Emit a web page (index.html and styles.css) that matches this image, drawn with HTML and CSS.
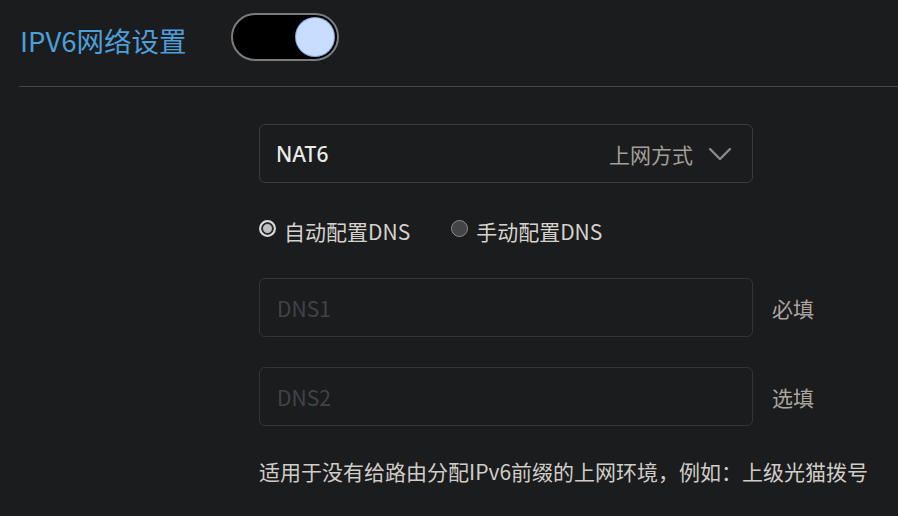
FILE: index.html
```html
<!DOCTYPE html>
<html lang="zh">
<head>
<meta charset="utf-8">
<link rel="stylesheet" href="styles.css">
</head>
<body>
<div class="page">
  <header class="head">
    <h1 class="title">IPV6网络设置</h1>
    <div class="toggle"><span class="knob"></span></div>
  </header>
  <div class="divider"></div>
  <main class="form">
    <div class="select">
      <span class="sel-value">NAT6</span>
      <span class="sel-label">上网方式</span>
      <svg class="chev" width="24" height="14" viewBox="0 0 24 14"><path d="M2 2 L12 12 L22 2" fill="none" stroke="#8a8a8a" stroke-width="2.4" stroke-linecap="round" stroke-linejoin="round"/></svg>
    </div>
    <div class="radios">
      <label class="radio"><span class="dot on"></span>自动配置DNS</label>
      <label class="radio"><span class="dot"></span>手动配置DNS</label>
    </div>
    <div class="row">
      <div class="input"><span class="ph">DNS1</span></div>
      <span class="hint">必填</span>
    </div>
    <div class="row">
      <div class="input"><span class="ph">DNS2</span></div>
      <span class="hint">选填</span>
    </div>
    <p class="note">适用于没有给路由分配IPv6前缀的上网环境，例如：上级光猫拨号</p>
  </main>
</div>
</body>
</html>
```
FILE: styles.css
```css
* { box-sizing: border-box; }
html, body { margin: 0; padding: 0; background: #1b1c1e; }
body {
  width: 898px; height: 516px; overflow: hidden;
  font-family: "Noto Sans CJK SC", "Noto Sans", sans-serif;
  color: #d0cdc8;
}
.page { padding-left: 19px; }
.head {
  display: flex; align-items: center;
  height: 86px; padding-left: 1px;
}
.title {
  margin: 0; font-weight: 400; font-size: 27.5px; color: #4d9fd9;
  width: 211px; line-height: 1;
  position: relative; top: -2px;
}
.toggle {
  width: 108px; height: 48px; border: 2px solid #7c7c7c; border-radius: 24px;
  background: #000; display: flex; align-items: center; justify-content: flex-end;
  padding-right: 3px; position: relative; top: -6px;
}
.knob {
  width: 38px; height: 38px; border-radius: 50%;
  background: #c8ddff; box-shadow: 0 0 0 1px #7fa9dd;
}
.divider { height: 1px; background: #434446; }
.form { padding-left: 240px; padding-top: 37px; }
.select {
  width: 494px; height: 59px; border: 1px solid #3a3b3e; border-radius: 6px;
  display: flex; align-items: center; padding: 0 20px 0 16px;
}
.sel-value { font-size: 21px; color: #ecebe8; font-weight: 500; flex: 1; font-family: "Noto Sans", "Noto Sans CJK SC", sans-serif;}
.sel-label { font-size: 21px; color: #a39f98; margin-right: 15px; }
.chev { display: block; }
.radios { display: flex; align-items: center; height: 48px; margin-top: 24px; gap: 41px; }
.radio { display: flex; align-items: center; font-size: 21px; color: #d6d2cc; }
.dot {
  width: 17px; height: 17px; border-radius: 50%; margin-right: 8px; position: relative; top: -3px;
  background: #444; border: 1.5px solid #8c8c8c;
}
.dot.on { background: #bfbfbf; border: 2px solid #d8d8d8; box-shadow: inset 0 0 0 2px #2a2a2a; }
.row { display: flex; align-items: center; margin-top: 47px; }
.radios + .row { margin-top: 23px; }
.row + .row { margin-top: 30px; }
.input {
  width: 494px; height: 59px; border: 1px solid #333436; border-radius: 6px;
  display: flex; align-items: center; padding-left: 17px;
}
.ph { font-size: 21px; color: #424347; }
.hint { margin-left: 19px; font-size: 21px; color: #aaa69f; }
.note { margin: 30px 0 0; font-size: 21px; color: #d0ccc6; }
```
